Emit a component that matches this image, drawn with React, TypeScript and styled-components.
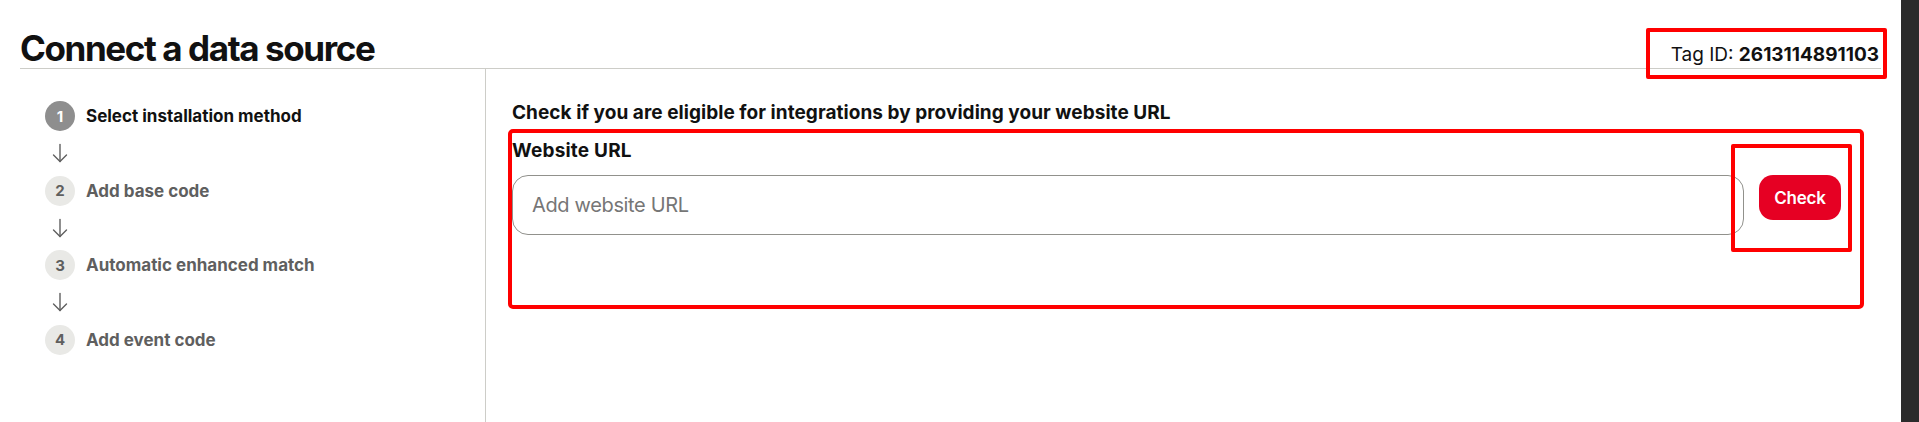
import React from "react";
import styled, { createGlobalStyle } from "styled-components";

const GlobalStyle = createGlobalStyle`
  html, body { margin: 0; padding: 0; background: #ffffff; }
  body { font-family: Inter, "Liberation Sans", sans-serif; color: #111111; }
  * { box-sizing: border-box; }
`;

const Frame = styled.div`
  display: flex;
  height: 422px;
  overflow: hidden;
`;

const Page = styled.div`
  flex: 1;
  min-width: 0;
  display: flex;
  flex-direction: column;
  padding: 0 20px;
`;

const WindowEdge = styled.div`
  width: 18px;
  flex-shrink: 0;
  background: #2b2b2b;
`;

const Header = styled.header`
  display: flex;
  justify-content: space-between;
  align-items: baseline;
  padding-top: 28px;
  border-bottom: 1px solid #cdcdc8;
`;

const Title = styled.h1`
  margin: 0;
  font-size: 35px;
  line-height: 40px;
  font-weight: 700;
  letter-spacing: -1.4px;
  color: #111111;
`;

const TagId = styled.div`
  position: relative;
  font-size: 19px;
  line-height: 24px;
  margin-right: 2px;
  color: #111111;
`;

const TagValue = styled.b`
  font-weight: 700;
`;

const Highlight = styled.span<{ $top: number; $right: number; $bottom: number; $left: number }>`
  position: absolute;
  top: ${(p) => p.$top}px;
  right: ${(p) => p.$right}px;
  bottom: ${(p) => p.$bottom}px;
  left: ${(p) => p.$left}px;
  border: 4px solid #ff0000;
  border-radius: 2px;
  pointer-events: none;
`;

const Body = styled.div`
  flex: 1;
  display: flex;
  min-height: 0;
`;

const Sidebar = styled.nav`
  width: 466px;
  flex-shrink: 0;
  border-right: 1px solid #cdcdc8;
  padding: 32px 0 0 25px;
`;

const StepList = styled.ol`
  list-style: none;
  margin: 0;
  padding: 0;
  display: flex;
  flex-direction: column;
`;

const StepRow = styled.li`
  display: flex;
  align-items: center;
  gap: 11px;
  height: 30px;
`;

const StepBadge = styled.span<{ $active?: boolean }>`
  width: 30px;
  height: 30px;
  border-radius: 50%;
  display: flex;
  align-items: center;
  justify-content: center;
  font-size: 15px;
  font-weight: 700;
  background: ${(p) => (p.$active ? "#8e8e8e" : "#e9e9e6")};
  color: ${(p) => (p.$active ? "#ffffff" : "#5f5f5f")};
`;

const StepLabel = styled.span<{ $active?: boolean }>`
  font-size: 17px;
  line-height: 24px;
  font-weight: 700;
  color: ${(p) => (p.$active ? "#111111" : "#5f5f5f")};
`;

const ArrowRow = styled.li`
  height: 44.5px;
  width: 30px;
  display: flex;
  align-items: center;
  justify-content: center;
  color: #5f5f5f;
`;

const Main = styled.main`
  flex: 1;
  min-width: 0;
  padding: 32px 21px 0 26px;
`;

const Prompt = styled.h2`
  margin: 0 0 8px;
  font-size: 19px;
  line-height: 24px;
  font-weight: 700;
  letter-spacing: 0.05px;
  color: #111111;
`;

const FormBox = styled.section`
  height: 172px;
  padding: 6px 19px 0 0;
  outline: 4px solid #ff0000;
  border-radius: 1px;
`;

const FieldLabel = styled.label`
  display: block;
  margin-bottom: 12px;
  font-size: 19px;
  line-height: 24px;
  font-weight: 700;
  letter-spacing: 0.2px;
  color: #111111;
`;

const InputRow = styled.div`
  display: flex;
  align-items: flex-start;
  gap: 15px;
`;

const UrlInput = styled.input`
  flex: 1;
  min-width: 0;
  height: 60px;
  border: 1px solid #91918c;
  border-radius: 16px;
  padding: 0 19px;
  font-family: inherit;
  font-size: 20px;
  letter-spacing: -0.35px;
  color: #111111;
  background: #ffffff;
  outline: none;
  &::placeholder {
    color: #767676;
  }
`;

const ButtonSlot = styled.div`
  position: relative;
  flex-shrink: 0;
`;

const CheckButton = styled.button`
  width: 82px;
  height: 45px;
  border: none;
  border-radius: 14px;
  background: #e60023;
  color: #ffffff;
  font-family: inherit;
  font-size: 17px;
  font-weight: 600;
  letter-spacing: -0.2px;
  cursor: pointer;
`;

const DownArrow = () => (
  <svg width="16" height="20" viewBox="0 0 16 20" fill="none" stroke="currentColor" strokeWidth="1.4" strokeLinecap="round" strokeLinejoin="round">
    <path d="M8 1.5V18.5" />
    <path d="M1.5 12L8 18.5L14.5 12" />
  </svg>
);

const steps = [
  "Select installation method",
  "Add base code",
  "Automatic enhanced match",
  "Add event code",
];

export default function App() {
  return (
    <>
      <GlobalStyle />
      <Frame>
        <Page>
          <Header>
            <Title>Connect a data source</Title>
            <TagId>
              Tag ID: <TagValue>2613114891103</TagValue>
              <Highlight $top={-15} $right={-8} $bottom={-12} $left={-25} />
            </TagId>
          </Header>
          <Body>
            <Sidebar>
              <StepList>
                {steps.map((label, i) => (
                  <React.Fragment key={label}>
                    {i > 0 && (
                      <ArrowRow aria-hidden>
                        <DownArrow />
                      </ArrowRow>
                    )}
                    <StepRow>
                      <StepBadge $active={i === 0}>{i + 1}</StepBadge>
                      <StepLabel $active={i === 0}>{label}</StepLabel>
                    </StepRow>
                  </React.Fragment>
                ))}
              </StepList>
            </Sidebar>
            <Main>
              <Prompt>Check if you are eligible for integrations by providing your website URL</Prompt>
              <FormBox>
                <FieldLabel htmlFor="website-url">Website URL</FieldLabel>
                <InputRow>
                  <UrlInput id="website-url" placeholder="Add website URL" />
                  <ButtonSlot>
                    <CheckButton type="button">Check</CheckButton>
                    <Highlight $top={-31} $right={-11} $bottom={-32} $left={-28} />
                  </ButtonSlot>
                </InputRow>
              </FormBox>
            </Main>
          </Body>
        </Page>
        <WindowEdge />
      </Frame>
    </>
  );
}
